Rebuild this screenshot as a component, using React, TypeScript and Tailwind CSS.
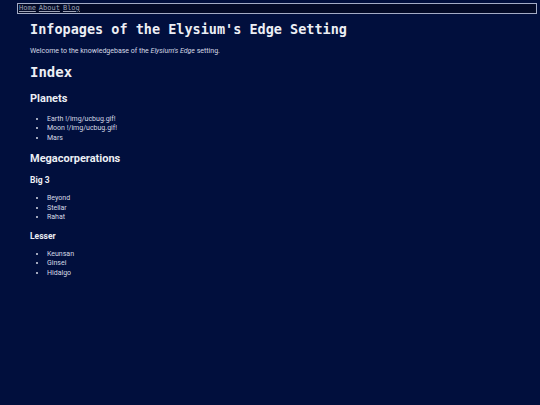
const mono = "font-['DejaVu_Sans_Mono','Liberation_Mono',monospace]"
const sans = "font-['Roboto','Noto_Sans',sans-serif]"

const Item = ({ children }: { children: React.ReactNode }) => (
	<li className="leading-[9.5px]">{children}</li>
)

const List = ({ items, className }: { items: string[]; className: string }) => (
	<ul className={`list-disc pl-[17px] text-[7px] text-[#d6dae6] ${className}`}>
		{items.map((it) => (
			<Item key={it}>{it}</Item>
		))}
	</ul>
)

export default function App() {
	return (
		<div className={`min-h-screen bg-[#010f3d] pt-[3px] ${sans}`}>
			<nav
				className={`mx-[17px] w-[520px] h-[11px] border border-[#a3abc6] bg-[#030a27] flex items-center gap-[3px] px-px text-[7px] leading-none text-[#9ea4b8] ${mono}`}
			>
				<a className="underline">Home</a>
				<a className="underline">About</a>
				<a className="underline">Blog</a>
			</nav>
			<main className="px-[30px]">
				<h1 className={`mt-[7px] text-[13.5px] leading-[16px] font-bold text-[#eceef4] ${mono}`}>
					Infopages of the Elysium's Edge Setting
				</h1>
				<p className="mt-[9.5px] text-[7px] leading-[9px] text-[#d6dae6]">
					Welcome to the knowledgebase of the <em>Elysium's Edge</em> setting.
				</p>
				<h2 className={`mt-[8px] text-[14px] leading-[16px] font-bold text-[#eceef4] ${mono}`}>
					Index
				</h2>
				<h3 className="mt-[12.5px] text-[11px] leading-[13px] font-bold text-[#eceef4]">Planets</h3>
				<List className="mt-[9.5px]" items={["Earth !/img/ucbug.gif!", "Moon !/img/ucbug.gif!", "Mars"]} />
				<h3 className="mt-[8.5px] text-[11px] leading-[13px] font-bold text-[#eceef4]">
					Megacorperations
				</h3>
				<h4 className="mt-[10px] text-[8.5px] leading-[10px] font-bold text-[#eceef4]">Big 3</h4>
				<List className="mt-[9.5px]" items={["Beyond", "Stellar", "Rahat"]} />
				<h4 className="mt-[8px] text-[8.5px] leading-[10px] font-bold text-[#eceef4]">Lesser</h4>
				<List className="mt-[9px]" items={["Keunsan", "Ginsei", "Hidalgo"]} />
			</main>
		</div>
	)
}
